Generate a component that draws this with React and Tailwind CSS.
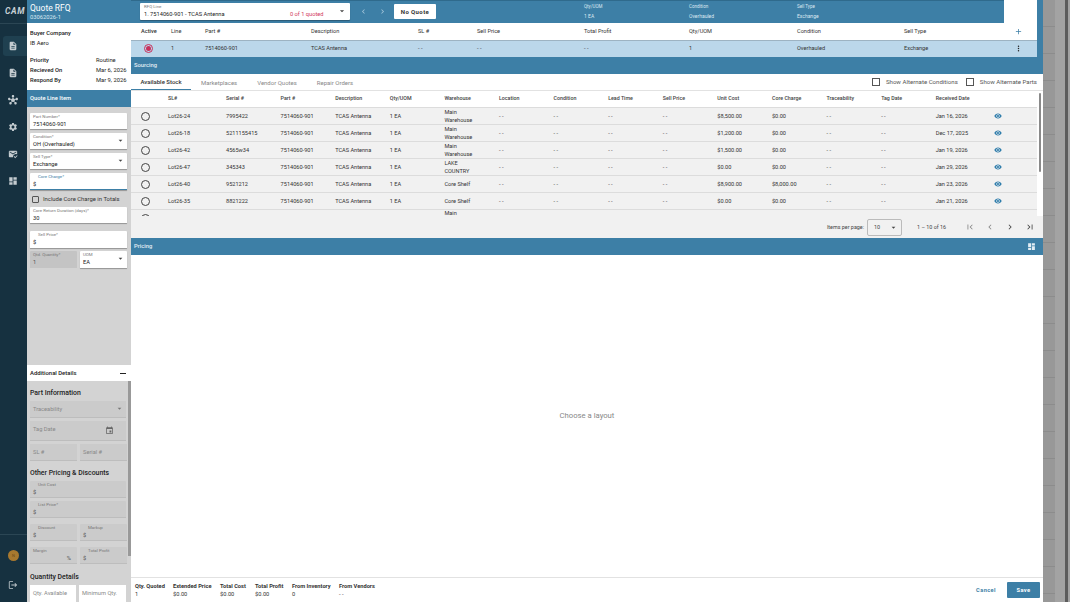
import React from "react";
import {
  MdAdd,
  MdArrowDropDown,
  MdChevronLeft,
  MdChevronRight,
  MdDashboard,
  MdDescription,
  MdEvent,
  MdFirstPage,
  MdHub,
  MdLastPage,
  MdLogout,
  MdMarkEmailRead,
  MdMoreVert,
  MdSettings,
  MdVisibility,
} from "react-icons/md";

const stock = [
  ["Lot26-24", "7995422", "Main Warehouse", "$8,500.00", "$0.00", "Jan 16, 2026"],
  ["Lot26-18", "5211155415", "Main Warehouse", "$1,200.00", "$0.00", "Dec 17, 2025"],
  ["Lot26-42", "4565w34", "Main Warehouse", "$1,500.00", "$0.00", "Jan 19, 2026"],
  ["Lot26-47", "345343", "LAKE COUNTRY", "$0.00", "$0.00", "Jan 29, 2026"],
  ["Lot26-40", "9521212", "Core Shelf", "$8,900.00", "$8,000.00", "Jan 23, 2026"],
  ["Lot26-35", "8821222", "Core Shelf", "$0.00", "$0.00", "Jan 21, 2026"],
];

const stockHead = ["SL#", "Serial #", "Part #", "Description", "Qty/UOM", "Warehouse", "Location", "Condition", "Lead Time", "Sell Price", "Unit Cost", "Core Charge", "Traceability", "Tag Date", "Received Date"];
const lineHead = ["Line", "Part #", "Description", "SL #", "Sell Price", "Total Profit", "Qty/UOM", "Condition", "Sell Type"];
const lineRow = ["1", "7514060-901", "TCAS Antenna", "- -", "- -", "- -", "1", "Overhauled", "Exchange"];
const totals = [["Qty. Quoted", "1", "w-[38px]"], ["Extended Price", "$0.00", "w-[47px]"], ["Total Cost", "$0.00", "w-[35px]"], ["Total Profit", "$0.00", "w-[37px]"], ["From Inventory", "0", "w-[47px]"], ["From Vendors", "- -", "w-[50px]"]];

const stockGrid = "grid grid-cols-[37px_58px_repeat(13,54.6px)_58px_1fr] items-center";
const lineGrid = "grid grid-cols-[40px_34px_106px_107px_59px_107px_105px_108px_107px_110px_1fr] items-center";

function Field({ label, value, select, className = "", active, muted, white, indent, h = "h-[16px]" }) {
  const bg = white ? "bg-white shadow-[0_1px_1px_rgba(0,0,0,0.3)]" : "bg-[#cbcbcb] border-b border-[#bdbdbd]";
  return (
    <div className={`relative shrink-0 rounded-t-[1px] px-[3px] pt-[1px] ${h} ${bg} ${active ? "border-b border-[#3d7fa6]" : ""} ${className}`}>
      <div className={`text-[4.4px] leading-[6px] ${indent ? "pl-[5px]" : ""} ${active ? "text-[#3d7fa6]" : "text-[#777]"}`}>{label}</div>
      <div className={`text-[5.7px] leading-[8px] ${muted ? "text-[#555]" : "text-[#222]"}`}>{value}</div>
      {select && <MdArrowDropDown className="absolute right-[2px] top-[3px] text-[9px] text-[#444]" />}
    </div>
  );
}

function Plain({ label, className = "", white, h = "h-[17px]", children }) {
  return (
    <div className={`relative flex shrink-0 items-start px-[3px] pt-[4px] text-[5.7px] leading-[8px] text-[#888] ${h} ${white ? "bg-white" : "bg-[#cbcbcb] border-b border-[#bdbdbd]"} ${className}`}>
      {label}
      {children}
    </div>
  );
}

function Sidebar() {
  const items = [MdDescription, MdDescription, MdHub, MdSettings, MdMarkEmailRead, MdDashboard];
  return (
    <div className="flex h-full w-[27px] shrink-0 flex-col overflow-hidden bg-[#163140] text-[#c4ccd0]">
      <div className="h-[24px] shrink-0 border-b border-[#2b4654] pl-[5px] text-[8.5px] font-bold italic leading-[23px] tracking-[0.6px] whitespace-nowrap text-[#c9d1d6]">CAM</div>
      <div className="mt-[12px] flex flex-col gap-[7px]">
        {items.map((Icon, i) => (
          <div key={i} className={`flex h-[20px] items-center rounded-l-[3px] ${i === 0 ? "ml-[3px] bg-[#1f4050] pl-[5px]" : "pl-[8px]"}`}>
            <Icon className="text-[10px]" />
          </div>
        ))}
      </div>
      <div className="mt-auto flex h-[68px] flex-col border-t border-[#2b4654] pl-[8px] pt-[15px]">
        <div className="flex h-[11px] w-[11px] items-center justify-center rounded-full bg-[#a8792f] text-[4px] text-[#6b4a17]">N</div>
        <MdLogout className="mt-[19px] text-[10px]" />
      </div>
    </div>
  );
}

function LeftPanel() {
  return (
    <div className="flex h-full w-[104px] shrink-0 flex-col overflow-hidden">
      <div className="h-[23px] shrink-0 bg-[#3d7fa6] pl-[3px] pt-[3px] text-white">
        <div className="text-[8.5px] leading-[10px]">Quote RFQ</div>
        <div className="mt-[1px] text-[5.8px] leading-[7px] text-[#d9e8f1]">03062026-1</div>
      </div>
      <div className="h-[67px] shrink-0 bg-white px-[3px] pt-[5px] text-[5.8px] leading-[10px] text-[#222]">
        <div className="font-medium">Buyer Company</div>
        <div>IB Aero</div>
        <div className="mt-[7px] flex"><span className="w-[66px] font-medium">Priority</span><span>Routine</span></div>
        <div className="flex"><span className="w-[66px] font-medium">Recieved On</span><span>Mar 6, 2026</span></div>
        <div className="flex"><span className="w-[66px] font-medium">Respond By</span><span>Mar 9, 2026</span></div>
      </div>
      <div className="flex h-[17px] shrink-0 items-center bg-[#3d7fa6] pl-[3px] text-[5.8px] font-medium text-white">Quote Line Item</div>
      <div className="flex h-[258px] shrink-0 flex-col bg-[#d3d3d3] pl-[3px] pr-[4px] pt-[6px]">
        <Field white label="Part Number*" value="7514060-901" />
        <Field white className="mt-[4px]" label="Condition*" value="OH (Overhauled)" select />
        <Field white className="mt-[4px]" label="Sell Type*" value="Exchange" select />
        <Field white active indent className="mt-[4px]" h="h-[17px]" label="Core Charge*" value="$" />
        <div className="mt-[2px] flex h-[14px] shrink-0 items-center pl-[2px] text-[5.9px] text-[#333]">
          <span className="mr-[4px] h-[7px] w-[7px] rounded-[1px] border border-[#555]" />
          Include Core Charge in Totals
        </div>
        <Field white className="mt-[1px]" label="Core Return Duration (days)*" value="30" />
        <Field white indent className="mt-[8px]" h="h-[17px]" label="Sell Price*" value="$" />
        <div className="mt-[3px] flex gap-[3px]">
          <Field muted h="h-[17px]" className="w-[47px] !bg-[#c4c4c4] !border-0" label="Qtd. Quantity*" value="1" />
          <Field white h="h-[17px]" className="w-[47px]" label="UOM" value="EA" select />
        </div>
      </div>
      <div className="flex h-[16px] shrink-0 items-center justify-between bg-white pl-[3px] pr-[5px] text-[5.9px] font-medium text-[#222]">
        Additional Details
        <span className="h-[1px] w-[6px] bg-[#222]" />
      </div>
      <div className="relative flex min-h-0 flex-1 flex-col bg-[#d3d3d3] pl-[3px] pr-[5px]">
        <div className="absolute right-0 top-0 h-[175px] w-[3px] bg-[#999]" />
        <div className="mt-[8px] text-[6.9px] leading-[9px] font-medium text-[#222]">Part Information</div>
        <Plain className="mt-[3px]" label="Traceability">
          <MdArrowDropDown className="absolute right-[2px] top-[3px] text-[9px] text-[#777]" />
        </Plain>
        <Plain className="mt-[3px]" h="h-[20px]" label="Tag Date">
          <MdEvent className="absolute right-[12px] top-[5px] text-[9px] text-[#666]" />
        </Plain>
        <div className="mt-[3px] flex gap-[3px]">
          <Plain className="w-[47px]" label="SL #" />
          <Plain className="w-[47px]" label="Serial #" />
        </div>
        <div className="mt-[8px] text-[6.9px] leading-[9px] font-medium text-[#222]">Other Pricing & Discounts</div>
        <Field muted indent h="h-[17px]" className="mt-[3px]" label="Unit Cost" value="$" />
        <Field muted indent h="h-[17px]" className="mt-[3px]" label="List Price*" value="$" />
        <div className="mt-[6px] flex gap-[3px]">
          <Field muted indent h="h-[17px]" className="w-[47px]" label="Discount" value="$" />
          <Field muted indent h="h-[17px]" className="w-[47px]" label="Markup" value="$" />
        </div>
        <div className="mt-[6px] flex gap-[3px]">
          <Field muted h="h-[17px]" className="w-[47px]" label="Margin" value={<span className="block pr-[3px] text-right">%</span>} />
          <Field muted indent h="h-[17px]" className="w-[47px]" label="Total Profit" value="$" />
        </div>
        <div className="mt-[9px] text-[6.9px] leading-[9px] font-medium text-[#222]">Quantity Details</div>
        <div className="mt-[3px] flex gap-[3px]">
          <Plain white className="w-[46px]" label="Qty. Available" />
          <Plain white className="w-[47px]" label="Minimum Qty." />
        </div>
      </div>
    </div>
  );
}

function TopBar() {
  return (
    <div className="flex h-[23px] w-[906px] shrink-0 bg-white">
      <div className="flex w-[873px] items-center bg-[#3d7fa6] pl-[9px] shadow-[inset_0_1px_0_#2f6a8c]">
        <div className="relative h-[17px] w-[210px] rounded-[1px] bg-white px-[4px] pt-[1px] shadow-[0_1px_1px_rgba(0,0,0,0.3)]">
          <div className="text-[4.4px] leading-[6px] text-[#777]">RFQ Line</div>
          <div className="flex text-[5.7px] leading-[8px] text-[#222]">
            <span className="w-[146px]">1. 7514060-901 - TCAS Antenna</span>
            <span className="text-[#d2385c]">0 of 1 quoted</span>
          </div>
          <MdArrowDropDown className="absolute right-[3px] top-[3px] text-[10px] text-[#444]" />
        </div>
        <MdChevronLeft className="ml-[9px] text-[9px] text-[#a5c6da]" />
        <MdChevronRight className="ml-[10px] text-[9px] text-[#a5c6da]" />
        <div className="ml-[7px] flex h-[15px] w-[42px] items-center justify-center rounded-[1px] bg-white text-[6px] font-bold tracking-[0.4px] text-[#333]">No Quote</div>
        <div className="ml-[148px] w-[105px] text-[5px] leading-[8.5px] text-[#dce9f2]"><div className="text-[4.5px]">Qty/UOM</div>1 EA</div>
        <div className="w-[108px] text-[5px] leading-[8.5px] text-[#dce9f2]"><div className="text-[4.5px]">Condition</div>Overhauled</div>
        <div className="text-[5px] leading-[8.5px] text-[#dce9f2]"><div className="text-[4.5px]">Sell Type</div>Exchange</div>
      </div>
    </div>
  );
}

function LineTable() {
  return (
    <div className="w-[906px] shrink-0 text-[5.6px] text-[#333]">
      <div className={`${lineGrid} h-[17px] bg-white`}>
        <span className="pl-[10px] font-medium">Active</span>
        {lineHead.map((h) => <span key={h}>{h}</span>)}
        <MdAdd className="text-[9px] text-[#3d7fa6]" />
      </div>
      <div className={`${lineGrid} h-[17px] border-t border-[#9db3c2] bg-[#bbd7ea] pb-[1px]`}>
        <span className="pl-[13px]">
          <span className="flex h-[9px] w-[9px] items-center justify-center rounded-full border border-[#c9315c]">
            <span className="h-[5px] w-[5px] rounded-full bg-[#c9315c]" />
          </span>
        </span>
        {lineRow.map((c, i) => <span key={i}>{c}</span>)}
        <MdMoreVert className="text-[9px] text-[#222]" />
      </div>
    </div>
  );
}

function StockCell({ children }) {
  return <span>{children}</span>;
}

function Sourcing() {
  return (
    <div className="shrink-0">
      <div className="flex h-[17px] items-center bg-[#3d7fa6] pl-[3px] text-[5.8px] font-medium text-[#e3eef5]">Sourcing</div>
      <div className="flex h-[17px] items-center border-b border-[#e2e2e2] bg-white text-[6px] text-[#888]">
        <div className="flex h-full w-[60px] items-center justify-center border-b border-[#3d7fa6] font-medium text-[#333]">Available Stock</div>
        <span className="ml-[10px]">Marketplaces</span>
        <span className="ml-[20px]">Vendor Quotes</span>
        <span className="ml-[20px]">Repair Orders</span>
        <div className="ml-auto flex items-center pr-[6px] text-[6.1px] text-[#555]">
          <span className="mr-[6px] h-[8px] w-[8px] border border-[#555]" />
          Show Alternate Conditions
          <span className="ml-[8px] mr-[6px] h-[8px] w-[8px] border border-[#555]" />
          Show Alternate Parts
        </div>
      </div>
      <div className="relative h-[125px] overflow-hidden bg-white">
        <div className="absolute right-[2px] top-[2px] h-[79px] w-[2px] rounded-full bg-[#8a8a8a]" />
        <div className={`${stockGrid} h-[16px] w-[906px] text-[5.3px] font-medium text-[#444]`}>
          <span />
          {stockHead.map((h) => <span key={h}>{h}</span>)}
        </div>
        {stock.map((r) => (
          <div key={r[0]} className={`${stockGrid} h-[17px] w-[906px] border-t border-[#dcdcdc] bg-[#f1f1f1] text-[5.6px] leading-[8px] text-[#333]`}>
            <span className="ml-[10px] h-[9px] w-[9px] rounded-full border border-[#444]" />
            <StockCell>{r[0]}</StockCell>
            <StockCell>{r[1]}</StockCell>
            <StockCell>7514060-901</StockCell>
            <StockCell>TCAS Antenna</StockCell>
            <StockCell>1 EA</StockCell>
            <span className="w-[30px]">{r[2]}</span>
            <StockCell>- -</StockCell>
            <StockCell>- -</StockCell>
            <StockCell>- -</StockCell>
            <StockCell>- -</StockCell>
            <StockCell>{r[3]}</StockCell>
            <StockCell>{r[4]}</StockCell>
            <StockCell>- -</StockCell>
            <StockCell>- -</StockCell>
            <StockCell>{r[5]}</StockCell>
            <MdVisibility className="text-[8px] text-[#2d7cab]" />
          </div>
        ))}
        <div className={`${stockGrid} h-[17px] w-[906px] border-t border-[#dcdcdc] bg-[#f1f1f1] text-[5.6px] leading-[6px] text-[#333]`}>
          <span className="ml-[10px] h-[9px] w-[9px] rounded-full border border-[#444]" />
          <span /><span /><span /><span /><span />
          <span className="self-start">Main</span>
        </div>
      </div>
      <div className="flex h-[22px] items-center justify-end bg-[#f1f1f1] pr-[8px] text-[5.4px] text-[#444]">
        <span>Items per page:</span>
        <div className="relative ml-[3px] flex h-[17px] w-[35px] items-center rounded-[2px] border border-[#bbb] pl-[6px] text-[5.5px]">
          10
          <MdArrowDropDown className="absolute right-[3px] top-[3px] text-[9px]" />
        </div>
        <span className="ml-[15px]">1 – 10 of 16</span>
        <MdFirstPage className="ml-[19px] text-[10px] text-[#888]" />
        <MdChevronLeft className="ml-[10px] text-[10px] text-[#888]" />
        <MdChevronRight className="ml-[10px] text-[10px]" />
        <MdLastPage className="ml-[10px] text-[10px]" />
      </div>
    </div>
  );
}

function Backdrop() {
  return (
    <div className="flex min-w-0 flex-1">
      <div className="grid h-full w-[12px] grid-rows-[repeat(22,27px)] bg-[#989898]">
        {Array.from({ length: 22 }).map((_, i) => <div key={i} className="border-b border-[#8c8c8c]" />)}
      </div>
      <div className="w-[10px] bg-[#a3a3a3]" />
      <div className="w-[3px] bg-[#5c5c5c]" />
      <div className="flex-1 bg-[#a3a3a3]" />
    </div>
  );
}

export default function App() {
  return (
    <div className="flex h-[602px] w-[1070px] overflow-hidden bg-white font-['Roboto',sans-serif]">
      <Sidebar />
      <LeftPanel />
      <div className="flex h-full w-[912px] shrink-0 flex-col shadow-[inset_1px_0_0_#cfcfcf]">
        <div className="shrink-0 bg-[#3d7fa6]">
          <TopBar />
          <LineTable />
        </div>
        <Sourcing />
        <div className="flex h-[17px] shrink-0 items-center justify-between bg-[#3d7fa6] pl-[3px] pr-[7px] text-[5.8px] font-medium text-[#e3eef5]">
          Pricing
          <MdDashboard className="text-[9px] text-[#e3eef5]" />
        </div>
        <div className="flex min-h-0 flex-1 items-center justify-center bg-white text-[7.7px] text-[#888]">Choose a layout</div>
        <div className="flex h-[25px] shrink-0 items-center border-t border-[#e2e2e2] bg-white pl-[4px] pr-[3px] text-[5.7px] leading-[8px] text-[#333]">
          {totals.map(([a, b, w]) => (
            <div key={a} className={w}><div className="font-bold">{a}</div><div>{b}</div></div>
          ))}
          <span className="ml-auto mr-[11px] font-bold tracking-[0.4px] text-[#3d7fa6]">Cancel</span>
          <div className="flex h-[16px] w-[33px] items-center justify-center rounded-[1px] bg-[#3d7fa6] font-bold tracking-[0.4px] text-white">Save</div>
        </div>
      </div>
      <Backdrop />
    </div>
  );
}
